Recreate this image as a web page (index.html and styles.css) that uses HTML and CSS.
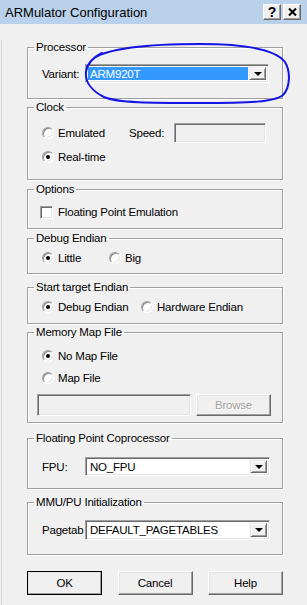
FILE: index.html
```html
<!DOCTYPE html>
<html lang="en">
<head>
  <meta charset="UTF-8">
  <meta name="viewport" content="width=device-width, initial-scale=1.0">
  <title>ARMulator Configuration</title>
  <link rel="stylesheet" href="styles.css">
</head>
<body>
  <div class="window">
    <div class="titlebar">
      <span class="title">ARMulator Configuration</span>
      <span class="capbtn capbtn-help">?</span>
      <span class="capbtn capbtn-close">
        <svg width="9" height="8" viewBox="0 0 9 8"><path d="M1 0.5 L8 7.5 M8 0.5 L1 7.5" stroke="#000" stroke-width="2"/></svg>
      </span>
    </div>

    <div class="client">
      <fieldset class="group g-proc">
        <legend>Processor</legend>
        <div class="inner">
          <div class="field">
            <span class="lbl">Variant:</span>
            <div class="combo combo-variant"><span class="val selected">ARM920T</span><span class="drop"><i></i></span></div>
          </div>
        </div>
      </fieldset>

      <fieldset class="group g-clock">
        <legend>Clock</legend>
        <div class="inner">
          <div class="row row-tall">
            <span class="opt w87"><span class="radio"></span>Emulated</span>
            <span class="speed-lbl">Speed:</span>
            <span class="edit speed-edit"></span>
          </div>
          <div class="row row-tall">
            <span class="opt"><span class="radio on"></span>Real-time</span>
          </div>
        </div>
      </fieldset>

      <fieldset class="group g-opts">
        <legend>Options</legend>
        <div class="inner">
          <div class="row">
            <span class="opt opt-check"><span class="check"></span>Floating Point Emulation</span>
          </div>
        </div>
      </fieldset>

      <fieldset class="group g-debug">
        <legend>Debug Endian</legend>
        <div class="inner">
          <div class="row">
            <span class="opt w67"><span class="radio on"></span>Little</span>
            <span class="opt"><span class="radio"></span>Big</span>
          </div>
        </div>
      </fieldset>

      <fieldset class="group g-start">
        <legend>Start target Endian</legend>
        <div class="inner">
          <div class="row">
            <span class="opt w99"><span class="radio on"></span>Debug Endian</span>
            <span class="opt"><span class="radio"></span>Hardware Endian</span>
          </div>
        </div>
      </fieldset>

      <fieldset class="group g-mem">
        <legend>Memory Map File</legend>
        <div class="inner">
          <div class="row">
            <span class="opt"><span class="radio on"></span>No Map File</span>
          </div>
          <div class="row">
            <span class="opt"><span class="radio"></span>Map File</span>
          </div>
          <div class="file-row">
            <span class="edit file-edit"></span>
            <span class="btn btn-browse">Browse</span>
          </div>
        </div>
      </fieldset>

      <fieldset class="group g-fpu">
        <legend>Floating Point Coprocessor</legend>
        <div class="inner">
          <div class="field">
            <span class="lbl">FPU:</span>
            <div class="combo combo-fpu"><span class="val">NO_FPU</span><span class="drop"><i></i></span></div>
          </div>
        </div>
      </fieldset>

      <fieldset class="group g-mmu">
        <legend>MMU/PU Initialization</legend>
        <div class="inner">
          <div class="field">
            <span class="lbl">Pagetab</span>
            <div class="combo combo-mmu"><span class="val">DEFAULT_PAGETABLES</span><span class="drop"><i></i></span></div>
          </div>
        </div>
      </fieldset>

      <div class="buttons">
        <span class="btn btn-default">OK</span>
        <span class="btn">Cancel</span>
        <span class="btn">Help</span>
      </div>
    </div>

    <!-- hand-drawn marker circle around the Variant combo -->
    <svg class="scribble" width="307" height="120" viewBox="0 0 307 120">
      <path d="M94,58 C110,48 150,44 200,44 C245,44 276,50 285,62 C291,72 290,88 283,95 C275,102 250,103 200,103 C150,103 118,103 104,97 C92,91 85,82 86,72 C87,64 92,58 102,53" fill="none" stroke="#1414e6" stroke-width="2" stroke-linecap="round"/>
    </svg>
  </div>
</body>
</html>
```

FILE: styles.css
```css
:root{--face:#f0f0f0;--shadow:#a0a0a0;--dark:#696969;--light:#e3e3e3;--font-ui:"Liberation Sans",Arial,sans-serif}
html,body{margin:0;padding:0}
body{width:307px;height:605px;overflow:hidden;background:var(--face);font-family:var(--font-ui);font-size:11px;letter-spacing:-.2px;color:#000}
.window{position:relative;height:605px}

/* title bar */
.titlebar{height:24px;background:#b9d1ea;display:flex;align-items:center;padding:0 6px 0 5px;box-sizing:border-box;letter-spacing:0}
.title{font-size:13px;flex:1;padding-top:1px}
.capbtn{width:18px;height:16px;box-sizing:border-box;background:var(--face);border:1px solid;border-color:#fff var(--dark) var(--dark) #fff;box-shadow:inset -1px -1px 0 var(--shadow);display:flex;align-items:center;justify-content:center;margin-left:2px}
.capbtn-help{font-weight:bold;font-size:14px;line-height:14px}

/* client area */
.client{margin-left:1px;border-left:1px solid #d6d6d6;padding-left:25px;height:581px;box-sizing:border-box}
.group{margin:0;padding:0;border:1px solid var(--shadow);box-shadow:1px 1px 0 #fff,inset 1px 1px 0 #fff;width:256px;box-sizing:border-box;min-width:0}
.group legend{margin-left:6px;padding:0 2px;line-height:14px;font-size:11.5px}
.inner{padding-left:14px}
.g-proc{margin-top:16px;height:59px}.g-proc .inner{padding-top:10px}
.g-clock{margin-top:1px;height:80px}.g-clock .inner{padding-top:9px}
.g-opts{margin-top:2px;height:47px}.g-opts .inner{padding-top:9px}
.g-debug{margin-top:2px;height:43px}.g-debug .inner{padding-top:6px}
.g-start{margin-top:6px;height:44px}.g-start .inner{padding-top:6px}
.g-mem{margin-top:1px;height:98px}.g-mem .inner{padding-top:10px}
.g-fpu{margin-top:8px;height:58px}.g-fpu .inner{padding-top:12px}
.g-mmu{margin-top:6px;height:60px}.g-mmu .inner{padding-top:11px}

/* rows, radios, checks */
.row{display:flex;align-items:center;height:14px;line-height:14px;font-size:11.5px}
.row-tall{height:20px}
.row-tall+.row-tall{margin-top:4px}
.g-mem .row+.row{margin-top:8px}
.opt{display:inline-flex;align-items:center;white-space:nowrap}
.w87{width:87px}.w67{width:67px}.w99{width:99px}
.radio{position:relative;width:12px;height:12px;box-sizing:border-box;border-radius:50%;background:#fff;border:1px solid;border-color:var(--shadow) #fff #fff var(--shadow);box-shadow:inset 1px 1px 0 #8a8a8a,inset -1px -1px 0 var(--light);margin-right:4px}
.radio.on::after{content:"";position:absolute;left:3px;top:3px;width:4px;height:4px;border-radius:50%;background:#000}
.opt-check{margin-left:-2px}
.check{width:13px;height:13px;box-sizing:border-box;background:#fff;border:1px solid;border-color:var(--shadow) #fff #fff var(--shadow);box-shadow:inset 1px 1px 0 var(--dark),inset -1px -1px 0 var(--light);margin-right:5px}
.speed-lbl{width:45px}

/* edit boxes and combos */
.edit{display:block;box-sizing:border-box;background:var(--face);border:1px solid;border-color:var(--shadow) #fff #fff var(--shadow);box-shadow:inset 1px 1px 0 var(--dark),inset -1px -1px 0 var(--light)}
.speed-edit{width:92px;height:20px}
.field{display:flex;align-items:center;font-size:11.5px}
.lbl{width:43px;white-space:nowrap}
.combo{display:flex;align-items:stretch;box-sizing:border-box;height:20px;background:#fff;border:1px solid;border-color:var(--shadow) #fff #fff var(--shadow);box-shadow:inset 1px 1px 0 var(--dark),inset -1px -1px 0 var(--light);padding:2px}
.combo-variant{width:184px;height:19px}
.combo-fpu{width:185px;height:19px}
.combo-mmu{width:185px}
.val{flex:1;display:flex;align-items:center;padding-left:2px;white-space:nowrap}
.val.selected{background:#3399ff;color:#fff;margin-right:1px}
.drop{width:17px;box-sizing:border-box;background:var(--face);border:1px solid;border-color:var(--light) var(--dark) var(--dark) var(--light);box-shadow:inset 1px 1px 0 #fff,inset -1px -1px 0 var(--shadow);display:flex;align-items:center;justify-content:center}
.drop i{width:0;height:0;border-left:4px solid transparent;border-right:4px solid transparent;border-top:4px solid #000}

/* memory map file row */
.file-row{display:flex;margin-top:9px;margin-left:-5px;gap:5px;height:22px}
.file-edit{width:154px;height:22px}

/* push buttons */
.btn{display:flex;align-items:center;justify-content:center;box-sizing:border-box;width:75px;height:24px;font-size:11.5px;background:var(--face);border:1px solid;border-color:#fff var(--dark) var(--dark) #fff;box-shadow:inset -1px -1px 0 var(--shadow),inset 1px 1px 0 var(--light)}
.btn-browse{width:75px;height:22px;color:var(--shadow);text-shadow:1px 1px 0 #fff}
.btn-default{outline:1px solid #000;outline-offset:-1px;border-color:#fff #000 #000 #fff}
.buttons{display:flex;justify-content:space-between;width:256px;margin-top:16px}

.scribble{position:absolute;left:0;top:0;pointer-events:none}
```
